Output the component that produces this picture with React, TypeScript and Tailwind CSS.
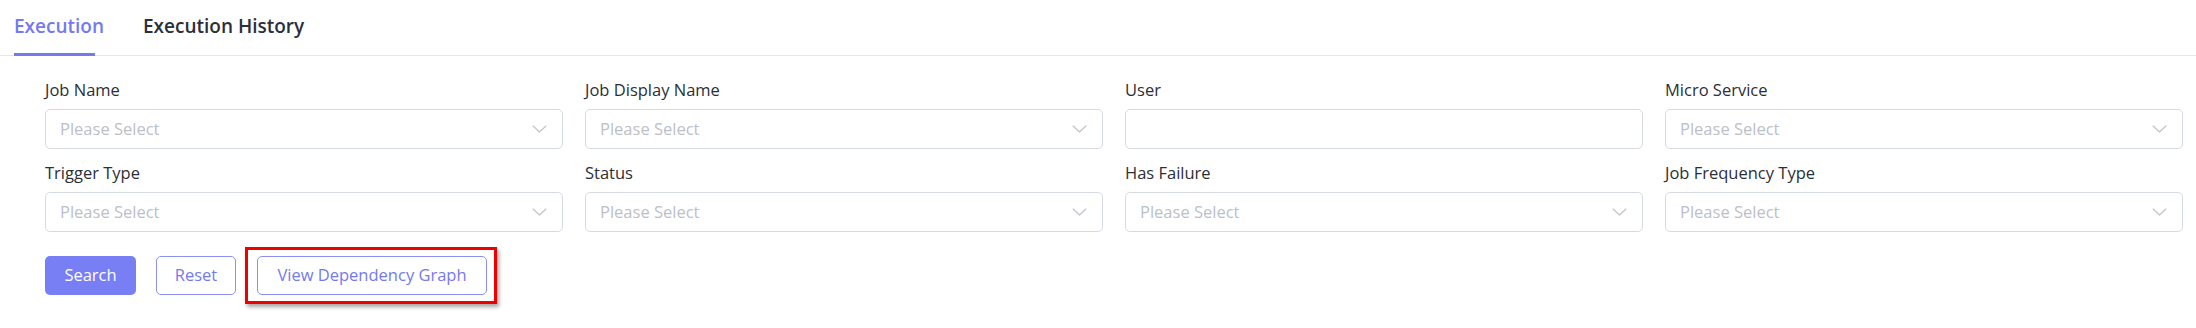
import type { FC } from 'react';

interface FieldProps {
  label: string;
  select?: boolean;
}

const Chevron: FC = () => (
  <svg width="15" height="8" viewBox="0 0 15 8" fill="none" className="shrink-0">
    <polyline points="0.8,0.8 7.5,7 14.2,0.8" stroke="#c0c4cc" strokeWidth="1.2" strokeLinejoin="round" />
  </svg>
);

const Field: FC<FieldProps> = ({ label, select = true }) => (
  <div className="flex flex-col">
    <label className="text-[16.5px] leading-[22px] text-[#2c2f36] mb-[8px]">{label}</label>
    <div className="h-[40px] rounded-[5px] border border-[#d5dae3] bg-white flex items-center pl-[14px] pr-[15px]">
      {select ? (
        <>
          <span className="flex-1 text-[16.5px] text-[#bcc0c8]">Please Select</span>
          <Chevron />
        </>
      ) : null}
    </div>
  </div>
);

const fields: FieldProps[] = [
  { label: 'Job Name' },
  { label: 'Job Display Name' },
  { label: 'User', select: false },
  { label: 'Micro Service' },
  { label: 'Trigger Type' },
  { label: 'Status' },
  { label: 'Has Failure' },
  { label: 'Job Frequency Type' },
];

const App: FC = () => {
  return (
    <div className="w-[2196px] h-[328px] bg-white font-['Open_Sans',sans-serif]">
      {/* tabs */}
      <div className="flex h-[56px] border-b border-[#e4e7ed]">
        <div className="w-[143px] pl-[14px]">
          <div className="h-[56px] flex flex-col">
            <span className="pt-[13px] text-[19px] leading-[26px] font-semibold text-[#7579f0]">Execution</span>
            <div className="mt-auto h-[3px] w-[81px] bg-[#7579f0]" />
          </div>
        </div>
        <div className="h-[56px]">
          <span className="block pt-[13px] text-[19px] leading-[26px] font-semibold text-[#2b2f3a]">Execution History</span>
        </div>
      </div>

      {/* filters */}
      <div className="pl-[45px] pr-[13px] pt-[23px]">
        <div className="grid grid-cols-4 gap-x-[22px] gap-y-[13px]">
          {fields.map((f) => (
            <Field key={f.label} {...f} />
          ))}
        </div>

        <div className="flex items-center mt-[15px]">
          <button className="w-[91px] h-[39px] rounded-[5px] bg-[#787ef3] text-white text-[16.5px]">Search</button>
          <button className="ml-[20px] w-[80px] h-[39px] rounded-[5px] border border-[#8c90f5] bg-white text-[#7579f0] text-[16.5px]">
            Reset
          </button>
          <div className="ml-[9px] border-[3px] border-[#ec0000] pl-[9px] pr-[7px] py-[6px] shadow-[2px_3px_4px_rgba(0,0,0,0.35)]">
            <button className="w-[230px] h-[39px] rounded-[5px] border border-[#8c90f5] bg-white text-[#7579f0] text-[16.5px]">
              View Dependency Graph
            </button>
          </div>
        </div>
      </div>
    </div>
  );
};

export default App;
